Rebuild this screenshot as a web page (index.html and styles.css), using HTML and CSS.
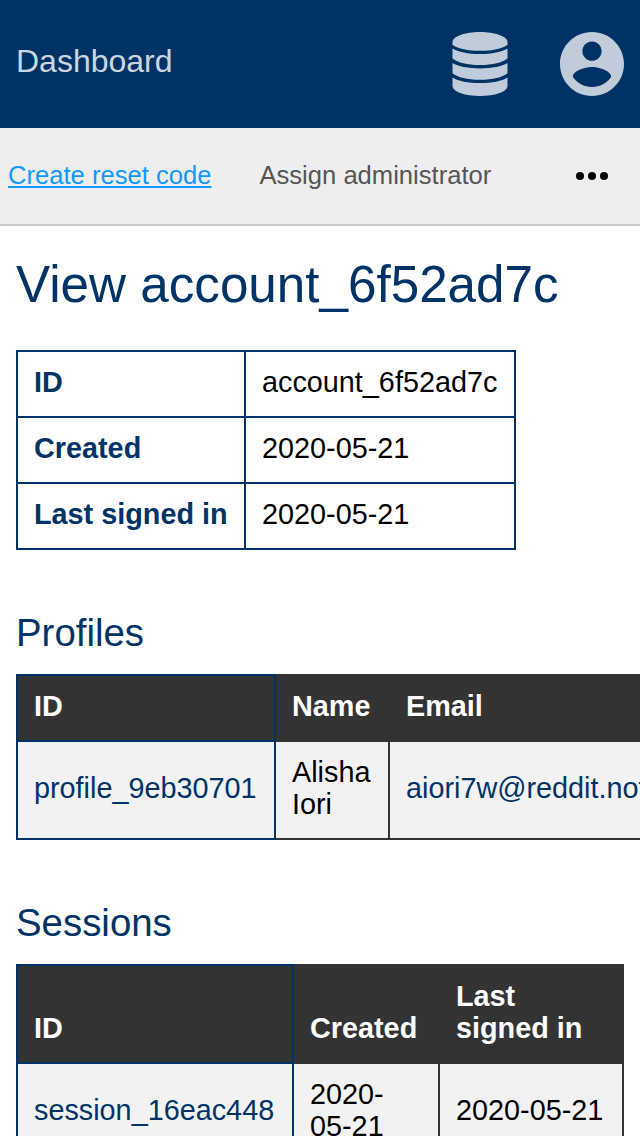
FILE: index.html
```
<!DOCTYPE html>
<html lang="en">
<head>
<meta charset="utf-8">
<title>View account</title>
<link rel="stylesheet" href="styles.css">
</head>
<body>
<header class="topbar">
  <a class="brand">Dashboard</a>
  <div class="actions">
    <svg class="icon" viewBox="0 0 64 64">
      <path d="M32 0C17 0 4.500 4.500 4.500 10V13C10 16.800 20 18.800 32 18.800S54 16.800 59.500 13V10C59.500 4.500 47 0 32 0Z"/>
      <path d="M4.500 16.500C10 20 20 22 32 22S54 20 59.500 16.500V26.500C54 30.700 45 33 32 33S10 30.700 4.500 26.500Z"/>
      <path d="M4.500 31C10 34.500 20 36.400 32 36.400S54 34.500 59.500 31V41.200C54 45.400 45 47.700 32 47.700S10 45.400 4.500 41.200Z"/>
      <path d="M4.500 45.400C10 49 20 51 32 51S54 49 59.500 45.400V54.500C58.500 60 47 64 32 64S5.500 60 4.500 54.500Z"/>
    </svg>
    <svg class="icon" viewBox="2 2 20 20">
      <path d="M12 2C6.480 2 2 6.480 2 12s4.480 10 10 10 10-4.480 10-10S17.520 2 12 2zm0 3c1.660 0 3 1.340 3 3s-1.340 3-3 3-3-1.340-3-3 1.340-3 3-3zm0 14.200c-2.500 0-4.710-1.280-6-3.220.03-1.990 4-3.080 6-3.080 1.990 0 5.970 1.090 6 3.080-1.290 1.940-3.500 3.220-6 3.220z"/>
    </svg>
  </div>
</header>
<nav class="menu">
  <a class="item active">Create reset code</a>
  <a class="item">Assign administrator</a>
  <svg class="more" viewBox="0 0 32 8"><circle cx="4" cy="4" r="4"/><circle cx="16" cy="4" r="4"/><circle cx="28" cy="4" r="4"/></svg>
</nav>
<main class="content">
  <h1 class="title">View account_6f52ad7c</h1>
  <table class="table details">
    <colgroup><col class="w228"><col class="w270"></colgroup>
    <tr><th>ID</th><td>account_6f52ad7c</td></tr>
    <tr><th>Created</th><td>2020-05-21</td></tr>
    <tr><th>Last signed in</th><td>2020-05-21</td></tr>
  </table>
  <h2 class="subtitle">Profiles</h2>
  <table class="table list profiles">
    <colgroup><col class="w258"><col class="w114"><col class="w330"></colgroup>
    <tr><th class="key">ID</th><th>Name</th><th>Email</th></tr>
    <tr><td class="key">profile_9eb30701</td><td>Alisha Iori</td><td class="link">aiori7w@reddit.not</td></tr>
  </table>
  <h2 class="subtitle">Sessions</h2>
  <table class="table list sessions">
    <colgroup><col class="w276"><col class="w146"><col class="w184"></colgroup>
    <tr><th class="key">ID</th><th>Created</th><th>Last<br>signed in</th></tr>
    <tr><td class="key">session_16eac448</td><td>2020-<br>05-21</td><td>2020-05-21</td></tr>
  </table>
</main>
</body>
</html>
```
FILE: styles.css
```
* { box-sizing: border-box; }
body {
  margin: 0;
  height: 1136px;
  overflow: hidden;
  background: #fff;
  color: #000;
  font-family: "Liberation Sans", Arial, sans-serif;
  font-size: 28.8px;
  line-height: 32px;
}
.topbar {
  display: flex;
  justify-content: space-between;
  align-items: center;
  height: 128px;
  padding: 0 16px;
  background: #036;
}
.brand {
  color: #ccd6e0;
  font-size: 32px;
  line-height: 36px;
  padding-bottom: 6px;
}
.actions { display: flex; gap: 48px; }
.icon { width: 64px; height: 64px; fill: #c0ccd9; }
.menu {
  display: flex;
  align-items: center;
  height: 98px;
  padding: 0 32px 0 8px;
  background: #eee;
  border-bottom: 2px solid #ccc;
  font-size: 25.6px;
}
.item { color: #555; margin-right: 48px; padding-bottom: 2px; white-space: nowrap; }
.active {
  color: #19f;
  text-decoration: underline;
  text-decoration-thickness: 2px;
  text-underline-offset: 2px;
}
.more { width: 32px; height: 8px; margin-left: auto; fill: #000; }
.content { padding: 29px 16px 0; }
.title {
  margin: 0 0 35px;
  color: #036;
  font-size: 51.2px;
  font-weight: 400;
  line-height: 60px;
}
.subtitle {
  margin: 60px 0 18px;
  color: #036;
  font-size: 38.4px;
  font-weight: 400;
  line-height: 46px;
}
.table { border-collapse: collapse; table-layout: fixed; }
.table th, .table td { padding: 14px 16px 18px; border: 2px solid #036; text-align: left; }
.details { width: 500px; }
.details th { color: #036; }
.list th, .list td { border-color: #333; }
.list th { background: #333; color: #fff; vertical-align: bottom; }
.list td { background: #f2f2f2; vertical-align: middle; }
.list .key { border-color: #036; }
.list td.key, .list .link { color: #036; }
.profiles { width: 704px; }
.sessions { width: 608px; }
.w228 { width: 228px; }
.w270 { width: 270px; }
.w258 { width: 258px; }
.w114 { width: 114px; }
.w330 { width: 330px; }
.w276 { width: 276px; }
.w146 { width: 146px; }
.w184 { width: 184px; }
```
